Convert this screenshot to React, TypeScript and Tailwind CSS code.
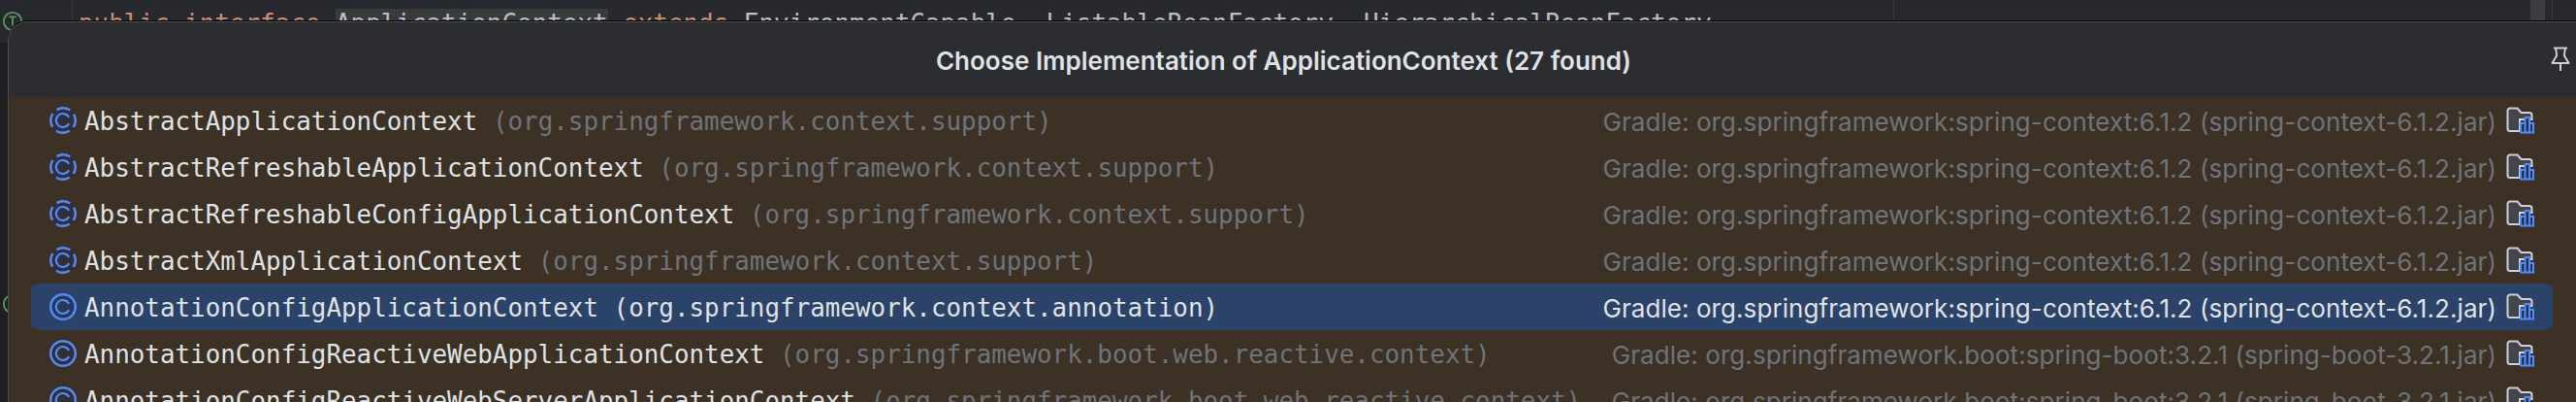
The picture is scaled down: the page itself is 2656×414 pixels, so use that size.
import React from 'react';

type Row = {
  name: string;
  pkg: string;
  lib: string;
  dashed?: boolean;
  selected?: boolean;
};

const springLib = 'Gradle: org.springframework:spring-context:6.1.2 (spring-context-6.1.2.jar)';
const bootLib = 'Gradle: org.springframework.boot:spring-boot:3.2.1 (spring-boot-3.2.1.jar)';

const rows: Row[] = [
  { name: 'AbstractApplicationContext', pkg: '(org.springframework.context.support)', lib: springLib, dashed: true },
  { name: 'AbstractRefreshableApplicationContext', pkg: '(org.springframework.context.support)', lib: springLib, dashed: true },
  { name: 'AbstractRefreshableConfigApplicationContext', pkg: '(org.springframework.context.support)', lib: springLib, dashed: true },
  { name: 'AbstractXmlApplicationContext', pkg: '(org.springframework.context.support)', lib: springLib, dashed: true },
  { name: 'AnnotationConfigApplicationContext', pkg: '(org.springframework.context.annotation)', lib: springLib, selected: true },
  { name: 'AnnotationConfigReactiveWebApplicationContext', pkg: '(org.springframework.boot.web.reactive.context)', lib: bootLib },
  { name: 'AnnotationConfigReactiveWebServerApplicationContext', pkg: '(org.springframework.boot.web.reactive.context)', lib: bootLib },
];

const ClassIcon = ({ dashed }: { dashed?: boolean }) => (
  <svg viewBox="0 0 28 28" className="h-7 w-7 shrink-0" fill="none">
    <circle cx="14" cy="14" r="12.75" fill="#25324d" fillOpacity="0.55" stroke="#548af7" strokeWidth="2.5" strokeDasharray={dashed ? '14.5 5.53' : undefined} strokeDashoffset={dashed ? '-12.75' : undefined} />
    <path d="M19.6 10a7 7 0 1 0 0 8" stroke="#548af7" strokeWidth="2.2" strokeLinecap="round" />
  </svg>
);

const LibIcon = () => (
  <svg viewBox="0 0 29 28" className="h-7 w-[29px] shrink-0" fill="none">
    <path d="M14 25H4A2.5 2.5 0 0 1 1.5 22.5V4A2.5 2.5 0 0 1 4 1.5h7.5L15.5 6H24a2.5 2.5 0 0 1 2.5 2.5V13H14Z" fill="#43454a" stroke="#ced0d6" strokeWidth="2" />
    <path d="M15 26.5V17h4.5v-6H24v6h4v9.500Z" fill="#25324d" stroke="#548af7" strokeWidth="2" />
    <path d="M19.500 17v9.500M24 17v9.500" stroke="#548af7" strokeWidth="2" />
  </svg>
);

const PinIcon = () => (
  <svg viewBox="0 0 20 26" className="h-[26px] w-5" fill="none" stroke="#ced0d6" strokeWidth="2">
    <path d="M3 1.500h14M5 1.500c1 4 1 6 1 8L1.500 17h17L14 9.500c0-2 0-4 1-8M10 17v8" strokeLinejoin="round" />
  </svg>
);

const ImplRow = ({ row }: { row: Row }) => (
  <div className={`flex h-12 items-center justify-between rounded-lg pl-[19px] pr-[19px] ${row.selected ? 'bg-[#2c4369]' : ''}`}>
    <div className="flex min-w-0 items-center gap-2 whitespace-pre font-['DejaVu_Sans_Mono',monospace] text-[25.9px]">
      <ClassIcon dashed={row.dashed} />
      <span className="pt-[2px]">
        <span className="text-[#dfe1e5]">{row.name}</span>
        <span className={row.selected ? 'text-[#dfe1e5]' : 'text-[#6f737a]'}> {row.pkg}</span>
      </span>
    </div>
    <div className="flex shrink-0 items-center gap-[10px]">
      <span className={`pt-[2px] font-['Inter',sans-serif] text-[26px] tracking-[0.07px] whitespace-nowrap ${row.selected ? 'text-[#dfe1e5]' : 'text-[#6f737a]'}`}>{row.lib}</span>
      <LibIcon />
    </div>
  </div>
);

const App: React.FC = () => {
  return (
    <div className="relative h-[414px] w-[2656px] overflow-hidden bg-[#1e1f22]">
      {/* editor behind the popup */}
      <div className="flex h-11 bg-[#27292e]">
        <div className="relative h-full w-[75px] shrink-0 border-r border-[#393b40]">
          <svg viewBox="0 0 24 24" className="absolute left-0.5 top-[11px] h-[22px] w-[22px]" fill="none" stroke="#57965c" strokeWidth="2">
            <circle cx="12" cy="12" r="10" />
            <path d="M8 7h8M12 7v10" />
          </svg>
        </div>
        <div className="relative min-w-0 flex-1 overflow-hidden whitespace-pre pl-[6px] pt-[7px] font-['DejaVu_Sans_Mono',monospace] text-[25.9px] leading-[34px] text-[#bcbec4]">
          <span className="text-[#cf8e6d]">public interface </span>
          <span className="bg-[#373b39]">ApplicationContext</span>
          <span className="text-[#cf8e6d]"> extends </span>
          EnvironmentCapable, ListableBeanFactory, HierarchicalBeanFactory,
          <div className="absolute bottom-0 left-[1877px] top-0 w-px bg-[#393b40]" />
        </div>
        <div className="h-full w-[15px] shrink-0 bg-[#3b3d42]" />
        <div className="h-full w-2 shrink-0 border-r border-[#393b40]" />
        <div className="w-6 shrink-0" />
      </div>

      {/* second gutter marker, only its left edge shows beside the popup */}
      <svg viewBox="0 0 24 24" className="absolute left-0.5 top-[302px] h-[22px] w-[22px]" fill="none" stroke="#57965c" strokeWidth="2">
        <circle cx="12" cy="12" r="10" />
      </svg>

      {/* popup */}
      <div className="absolute left-2 right-0 top-[22px] flex h-[400px] flex-col overflow-hidden rounded-tl-[20px] border-l border-t border-[#4a4c50] bg-[#2b2d30] shadow-[0_-1px_0_#000]">
        <div className="relative flex h-[77px] shrink-0 items-center justify-center">
          <span className="ml-[-18px] pt-[2px] font-['Inter',sans-serif] text-[26px] font-semibold text-[#dfe1e5]">Choose Implementation of ApplicationContext (27 found)</span>
          <div className="absolute right-[6px] top-[25px]">
            <PinIcon />
          </div>
        </div>
        <div className="flex-1 bg-[#3d3125] pl-[23px] pr-[24px]">
          {rows.map((row) => (
            <ImplRow key={row.name} row={row} />
          ))}
        </div>
      </div>
    </div>
  );
};

export default App;
